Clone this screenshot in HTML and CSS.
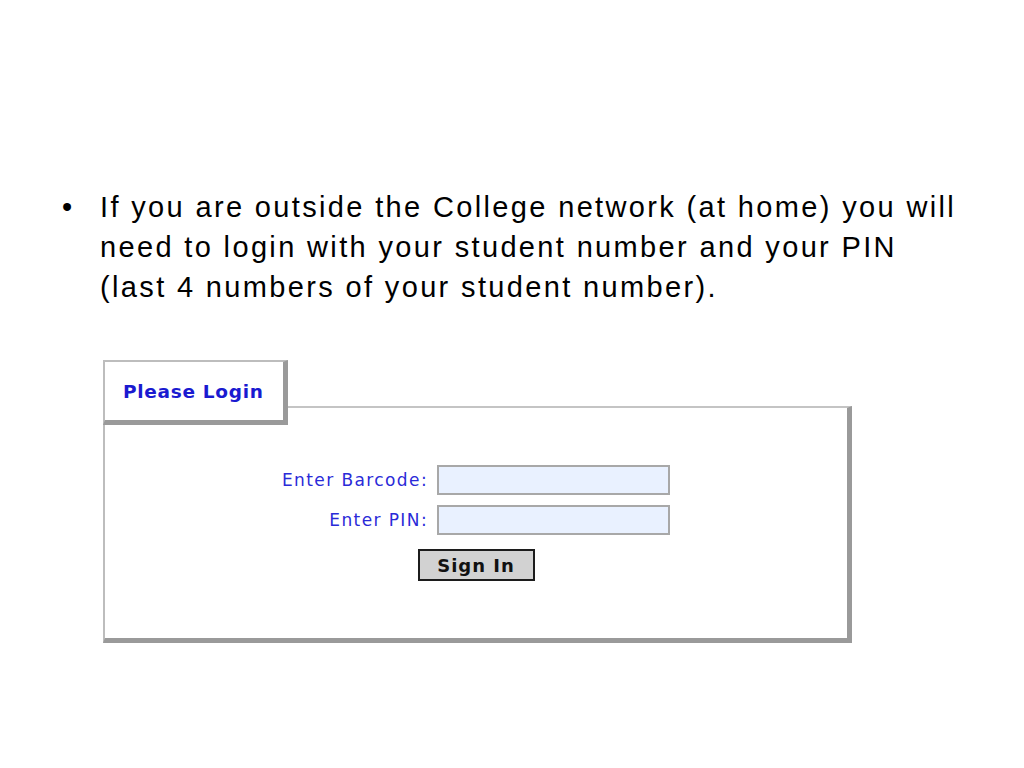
FILE: index.html
```html
<!DOCTYPE html>
<html lang="en">
<head>
  <meta charset="UTF-8">
  <title>Please Login</title>
  <link rel="stylesheet" href="styles.css">
</head>
<body>

  <!-- Slide text -->
  <ul class="bullets">
    <li>If you are outside the College network (at home) you will need to login with your student number and your PIN (last 4 numbers of your student number).</li>
  </ul>

  <!-- Login panel -->
  <div class="login-panel">
    <div class="login-tab">Please Login</div>
    <div class="login-box">
      <form class="login-form" onsubmit="return false">
        <label for="barcode">Enter Barcode:</label>
        <input type="text" id="barcode" name="barcode">
        <label for="pin">Enter PIN:</label>
        <input type="password" id="pin" name="pin">
        <button type="submit">Sign In</button>
      </form>
    </div>
  </div>

</body>
</html>
```
FILE: styles.css
```css
* { margin: 0; padding: 0; box-sizing: border-box; }
body {
  background: #fff;
  font-family: 'Liberation Sans', Arial, sans-serif;
  color: #000;
}
.bullets {
  list-style: none;
  padding: 187px 0 0 62px;
  width: 960px;
}
.bullets li {
  display: flex;
  font-size: 29px;
  line-height: 40px;
  letter-spacing: 2.35px;
}
.bullets li::before {
  content: "\2022";
  width: 38px;
  flex-shrink: 0;
  letter-spacing: 0;
}
.login-panel {
  margin: 53px 0 0 103px;
  width: 749px;
}
.login-tab {
  position: relative;
  z-index: 1;
  width: 185px;
  height: 65px;
  background: #fff;
  border-top: 2px solid #bdbdbd;
  border-left: 2px solid #bdbdbd;
  border-right: 5px solid #9a9a9a;
  border-bottom: 5px solid #9a9a9a;
  padding: 19px 0 0 18px;
  font-family: 'DejaVu Sans', Verdana, sans-serif;
  font-weight: bold;
  font-size: 18.5px;
  letter-spacing: 0.7px;
  color: #1a1ad0;
}
.login-box {
  margin-top: -19px;
  height: 237px;
  border-top: 2px solid #c4c4c4;
  border-left: 2px solid #bdbdbd;
  border-right: 5px solid #9a9a9a;
  border-bottom: 5px solid #9a9a9a;
  padding-top: 57px;
  display: flex;
  justify-content: center;
  align-items: flex-start;
}
.login-form {
  display: grid;
  grid-template-columns: auto 233px;
  column-gap: 9px;
  row-gap: 10px;
  align-items: center;
  font-family: 'DejaVu Sans', Verdana, sans-serif;
  font-size: 17px;
  letter-spacing: 1.4px;
  color: #2a2ad8;
}
.login-form label { text-align: right; }
.login-form input {
  height: 30px;
  background: #e9f1ff;
  border: 2px solid #a8a8a8;
  outline: none;
}
.login-form button {
  grid-column: 1 / 3;
  justify-self: center;
  margin: 4px 0 0 0;
  width: 117px;
  height: 32px;
  background: #d2d2d2;
  border: 2px solid #1c1c1c;
  font-family: 'DejaVu Sans', Verdana, sans-serif;
  font-weight: bold;
  font-size: 18px;
  letter-spacing: 1px;
  color: #111;
}
```
